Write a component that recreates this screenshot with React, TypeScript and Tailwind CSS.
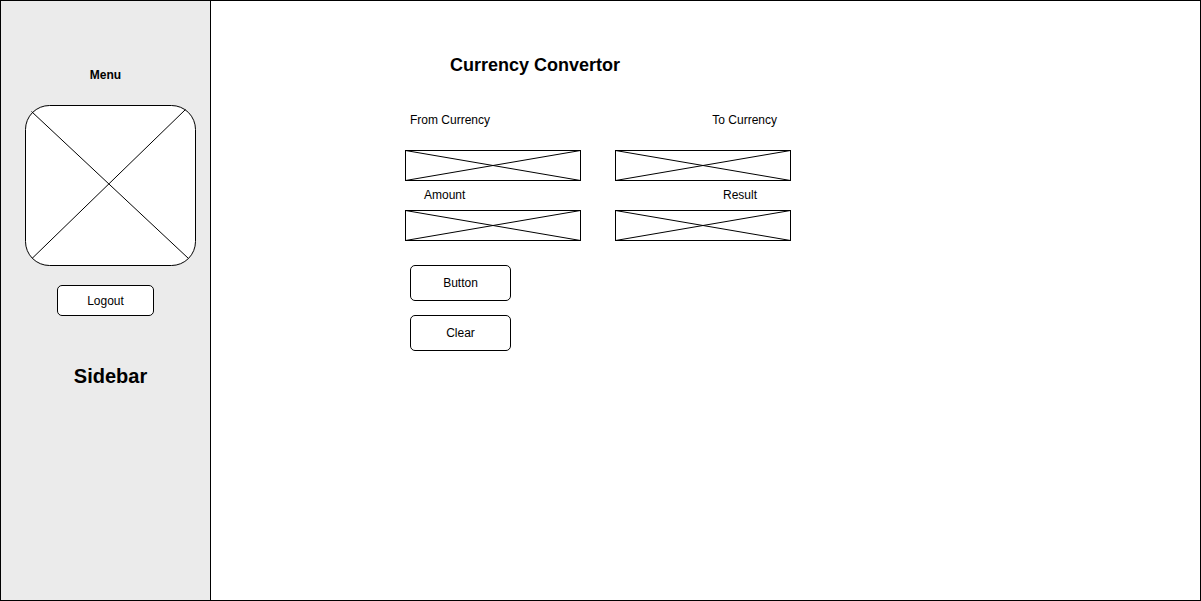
import type { ReactNode } from "react";

const control =
  "block h-[31px] w-full appearance-none rounded-none border border-black bg-white px-2 text-xs outline-none";

function Crossed({ children }: { children: ReactNode }) {
  return (
    <div className="relative">
      {children}
      <svg
        className="pointer-events-none absolute inset-0 h-full w-full"
        viewBox="0 0 176 31"
        preserveAspectRatio="none"
        stroke="#000"
        aria-hidden="true"
      >
        <path d="M0.5 0.5L175.5 30.5M0.5 30.5L175.5 0.5" />
      </svg>
    </div>
  );
}

export default function App() {
  return (
    <div className="flex min-h-screen border border-black bg-white font-['Liberation_Sans',Arial,sans-serif] text-xs text-black">
      <aside className="flex w-[210px] shrink-0 flex-col items-center border-r border-black bg-[#ebebeb] pt-[66px]">
        <h2 className="font-bold">Menu</h2>
        <svg
          className="mt-[22px] ml-[10px] h-[161px] w-[171px]"
          viewBox="0 0 171 161"
          fill="none"
          stroke="#000"
          aria-hidden="true"
        >
          <rect x="0.5" y="0.5" width="170" height="160" rx="24" fill="#fff" />
          <path d="M6.5 6.5L163.5 153.5M160.5 4.5L7 153.5" />
        </svg>
        <button
          type="button"
          className="mt-[19px] h-[31px] w-[97px] rounded-[5px] border border-black bg-white"
        >
          Logout
        </button>
        <p className="mt-12 ml-[10px] text-xl leading-6 font-bold">Sidebar</p>
      </aside>

      <main className="min-w-0 flex-1 pt-[52px] pl-[194px]">
        <h1 className="pl-[45px] text-lg leading-6 font-bold">Currency Convertor</h1>
        <form className="mt-[35px]" onSubmit={(event) => event.preventDefault()}>
          <div className="grid max-w-[386px] grid-cols-2 gap-x-[34px]">
            <label htmlFor="from" className="pl-[5px]">
              From Currency
            </label>
            <label htmlFor="to" className="pr-[14px] text-right">
              To Currency
            </label>
            <div className="mt-[22px]">
              <Crossed>
                <select id="from" className={control}>
                  <option value=""></option>
                </select>
              </Crossed>
            </div>
            <div className="mt-[22px]">
              <Crossed>
                <select id="to" className={control}>
                  <option value=""></option>
                </select>
              </Crossed>
            </div>
            <label htmlFor="amount" className="mt-[6px] pl-[19px]">
              Amount
            </label>
            <label htmlFor="result" className="mt-[6px] pr-[34px] text-right">
              Result
            </label>
            <div className="mt-[7px]">
              <Crossed>
                <input id="amount" type="text" className={control} />
              </Crossed>
            </div>
            <div className="mt-[7px]">
              <Crossed>
                <input id="result" type="text" readOnly className={control} />
              </Crossed>
            </div>
          </div>
          <div className="mt-6 flex flex-col items-start gap-[14px] pl-[5px]">
            <button
              type="submit"
              className="h-9 w-[101px] rounded-[5px] border border-black bg-white"
            >
              Button
            </button>
            <button
              type="reset"
              className="h-9 w-[101px] rounded-[5px] border border-black bg-white"
            >
              Clear
            </button>
          </div>
        </form>
      </main>
    </div>
  );
}
